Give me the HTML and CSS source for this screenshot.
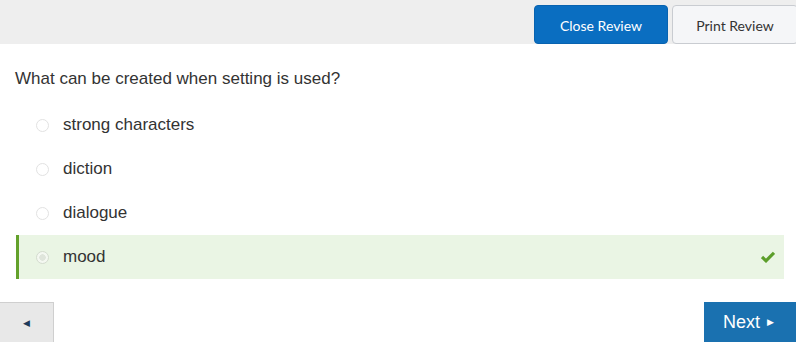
FILE: index.html
```html
<!DOCTYPE html>
<html>
<head>
<meta charset="utf-8">
<link rel="stylesheet" href="styles.css">
</head>
<body>
<header class="topbar">
  <button class="btn-close">Close Review</button>
  <button class="btn-print">Print Review</button>
</header>
<main class="content">
  <p class="question">What can be created when setting is used?</p>
  <ul class="options">
    <li class="option"><span class="radio"></span><span class="label">strong characters</span></li>
    <li class="option"><span class="radio"></span><span class="label">diction</span></li>
    <li class="option"><span class="radio"></span><span class="label">dialogue</span></li>
    <li class="option correct"><span class="radio checked"></span><span class="label">mood</span>
      <svg class="check" width="14" height="12" viewBox="0 0 14 12"><path d="M1 6 L5 9.8 L13 1.8" fill="none" stroke="#5c9e2a" stroke-width="3.2"/></svg>
    </li>
  </ul>
</main>
<footer class="nav">
  <button class="btn-back">&#9664;</button>
  <button class="btn-next">Next <span class="tri">&#9654;</span></button>
</footer>
</body>
</html>
```
FILE: styles.css
```css
* { box-sizing: border-box; }
html, body { margin: 0; padding: 0; }
body {
  width: 796px;
  height: 342px;
  overflow: hidden;
  background: #fff;
  font-family: Arial, "Liberation Sans", sans-serif;
  color: #333;
}
.topbar {
  height: 44px;
  background: #eeeeee;
  display: flex;
  justify-content: flex-end;
  align-items: flex-end;
  gap: 4px;
}
.topbar button {
  font-family: Lato, sans-serif;
  font-size: 14px;
  height: 39px;
  padding-top: 2px;
  border-radius: 4px;
  cursor: pointer;
}
.btn-close {
  width: 134px;
  background: #0a6ec1;
  color: #fff;
  border: 1px solid #0863b0;
}
.btn-print {
  width: 126px;
  margin-right: -2px;
  background: #f5f6f8;
  color: #333;
  border: 1px solid #c9ccd1;
}
.content {
  padding: 0 12px 0 16px;
}
.question {
  margin: 25px 0 0 -1px;
  font-size: 17px;
  line-height: 20px;
}
.options {
  list-style: none;
  margin: 14px 0 0;
  padding: 0;
}
.option {
  height: 44px;
  display: flex;
  align-items: center;
  font-size: 17px;
}
.radio {
  width: 13px;
  height: 13px;
  border-radius: 50%;
  border: 1px solid #e2e2e2;
  background: #fff;
  margin-left: 20px;
  margin-right: 14px;
  flex: none;
}
.radio.checked {
  border-color: #d4dccf;
  background: radial-gradient(circle, #dfe5db 0 3px, #f4f8f1 3.5px);
}
.correct {
  background: #eaf5e4;
  border-left: 3px solid #63a12b;
}
.correct .radio { margin-left: 17px; }
.check { margin-left: auto; margin-right: 9px; }
.nav {
  margin-top: 23px;
  display: flex;
  justify-content: space-between;
}
.btn-back {
  width: 55px;
  height: 40px;
  background: #e8e8e8;
  border: 1px solid #cfcfcf;
  border-bottom: none;
  color: #1d3b5a;
  font-size: 9px;
  margin-left: -1px;
}
.btn-next {
  width: 92px;
  height: 40px;
  background: #1a71b0;
  color: #fff;
  border: none;
  font-family: Arial, "Liberation Sans", sans-serif;
  font-size: 18px;
  text-align: left;
  padding-left: 19px;
}
.btn-next .tri { font-size: 9px; vertical-align: 3px; margin-left: 2px; }
```
